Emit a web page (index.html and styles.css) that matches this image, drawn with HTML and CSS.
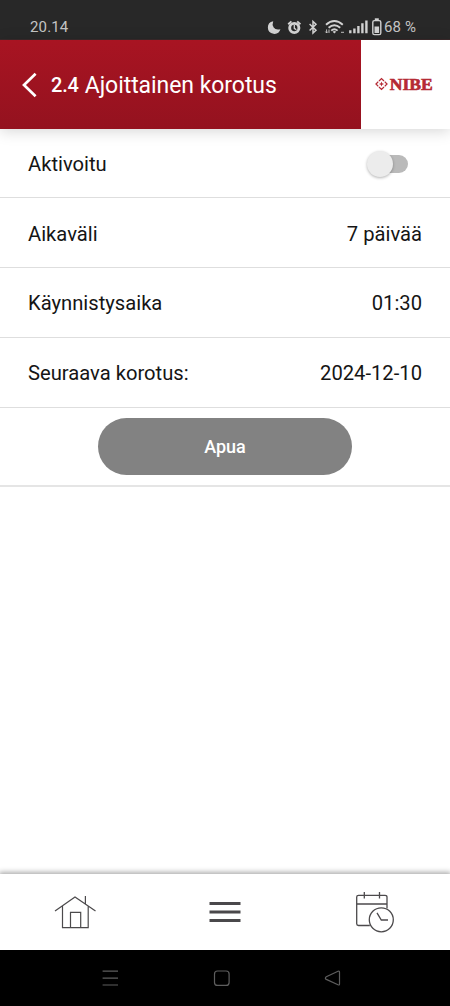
FILE: index.html
```html
<!DOCTYPE html>
<html lang="fi">
<head>
<meta charset="utf-8">
<title>Ajoittainen korotus</title>
<link rel="stylesheet" href="styles.css">
</head>
<body>
<div class="screen">
  <div class="status">
    <span class="clock">20.14</span>
    <div class="status-right">
      <svg class="status-icons" width="116" height="20" viewBox="267 17 116 20" fill="none" stroke="#d2d2d2">
        <path d="M273.2 21.2A6.4 6.4 0 1 0 280.4 29.3Q275.6 30.4 273.7 27.6Q271.8 24.6 273.2 21.2Z" fill="#d2d2d2" stroke="none"/>
        <circle cx="294.3" cy="28" r="4.6" stroke-width="2.9"/>
        <path d="M288.2 24.2L291.4 21.4M300.4 24.2L297.2 21.4" stroke-width="1.9"/>
        <path d="M294.3 25V28.3L296.3 29.8" stroke-width="1.3"/>
        <path d="M309.6 24L316 30.2L313 33V21.4L316 24.2L309.6 30.5" stroke-width="1.5"/>
        <path d="M326 24.8Q334.3 17.3 342.8 24.8M328.6 27.8Q334.3 22.6 340.2 27.8M331.2 30.6Q334.3 27.8 337.6 30.6" stroke-width="1.9"/>
        <path d="M334.4 33.6L332.6 31.7Q334.4 30.3 336.2 31.7Z" fill="#d2d2d2" stroke="none"/>
        <path d="M326.6 33V29.4M325.4 31.6L326.6 33L327.8 31.6M329 29.5V33M341 32.3H344" stroke-width=".9"/>
        <path d="M350.3 30.3V33.3M354.4 28.4V33.3M358.4 26V33.3M362.4 23.2V33.3M366.4 20.5V33.3" stroke-width="2.4"/>
        <rect x="372.8" y="20.6" width="8" height="14" rx="1.6" stroke-width="1.4"/>
        <path d="M374.8 19.2H378.8" stroke-width="1.8"/>
        <path d="M374.5 26.5H379.1V33H374.5Z" fill="#d2d2d2" stroke="none"/>
      </svg>
      <span class="battery-text">68 %</span>
    </div>
  </div>
  <header class="header">
    <div class="title-bar">
      <svg class="back" width="18" height="28" viewBox="0 0 18 28" fill="none" stroke="#fff" stroke-width="2.7"><path d="M15.6 2.8L4 14L15.6 25.2"/></svg>
      <span class="number">2.4</span>
      <h1 class="title">Ajoittainen korotus</h1>
    </div>
    <div class="brand">
      <svg width="60" height="18" viewBox="0 0 60 18">
        <path d="M4 5.9L6.5 3.6L9 5.9M9.7 6.6L12 9L9.7 11.4M9 12.1L6.5 14.4L4 12.1M3.3 11.4L1 9L3.3 6.6" fill="none" stroke="#b52a34" stroke-width="1.3"/>
        <path d="M6.5 6.4L7.2 8.3L9.1 9L7.2 9.7L6.5 11.6L5.8 9.7L3.9 9L5.8 8.3Z" fill="#b52a34"/>
        <text class="brand-name" x="14.7" y="14.5" textLength="43" lengthAdjust="spacingAndGlyphs">NIBE</text>
      </svg>
    </div>
  </header>
  <main class="content">
    <div class="row"><span>Aktivoitu</span><span class="switch"><span class="thumb"></span></span></div>
    <div class="row"><span>Aikaväli</span><span>7 päivää</span></div>
    <div class="row"><span>Käynnistysaika</span><span>01:30</span></div>
    <div class="row"><span>Seuraava korotus:</span><span>2024-12-10</span></div>
    <div class="help-row"><button class="help">Apua</button></div>
  </main>
  <nav class="tabs">
    <svg width="150" height="76" viewBox="0 874 150 76" fill="none" stroke="#4c4a4c" stroke-width="1.2">
      <path d="M55 911L75 897L95.5 911M62.5 906.2V927.6H88.2V906.2M70.5 927.6V912.3H80.7V927.6M85.4 904V896"/>
    </svg>
    <svg width="150" height="76" viewBox="150 874 150 76" fill="none" stroke="#4a484b" stroke-width="3.2">
      <path d="M209.5 903.5H240.5M209.5 912H240.5M209.5 920.5H240.5"/>
    </svg>
    <svg width="150" height="76" viewBox="300 874 150 76" fill="none" stroke="#4c4a4c" stroke-width="1.3">
      <path d="M369.8 925.5H358.5Q356.7 925.5 356.7 923.7V897Q356.7 895.3 358.5 895.3H385Q387 895.3 387 897V908.5M356.7 904H387M364.3 892V898.6M379.5 892V898.6"/>
      <circle cx="381.3" cy="919.8" r="12"/>
      <path d="M377 912.8L381.3 920H388"/>
    </svg>
  </nav>
  <div class="system-nav">
    <svg width="450" height="56" viewBox="0 950 450 56" fill="none" stroke="#5e5e5e" stroke-width="1.2">
      <path d="M102.6 971.2H118M102.6 978.2H118M102.6 985H118"/>
      <rect x="214.5" y="971" width="14.6" height="14.4" rx="3"/>
      <path d="M326.3 976.8L338 971.3Q339.5 970.8 339.5 972.2V984Q339.5 985.4 338 984.8L326.3 979.4Q324.4 978.2 326.3 976.8Z"/>
    </svg>
  </div>
</div>
</body>
</html>
```

FILE: styles.css
```css
* { box-sizing: border-box; }
body { margin: 0; background: #fff; font-family: Roboto, "Liberation Sans", sans-serif; }
svg { display: block; }
.screen { display: flex; flex-direction: column; width: 450px; height: 1006px; overflow: hidden; }
.status { flex: none; height: 40px; padding: 14px 33px 0 30px; display: flex; justify-content: space-between; background: #282828; color: #c4c4c4; font-size: 15px; line-height: 26px; border-bottom: 1px solid #3a292a; }
.clock { letter-spacing: .15px; }
.status-right { display: flex; }
.status-icons { margin-top: 3px; }
.battery-text { width: 34px; padding-left: 1px; white-space: nowrap; letter-spacing: .1px; }
.header { flex: none; display: flex; height: 88.5px; box-shadow: 0 2px 14px rgba(0, 0, 0, .17); }
.title-bar { width: 361px; display: flex; align-items: center; padding-left: 20px; padding-top: 1px; background: linear-gradient(#a81422, #94121f); color: #fff; }
.back { margin-right: 13px; }
.number { font-size: 20px; font-weight: 500; letter-spacing: -.2px; margin-right: 6px; }
.title { margin: 0; padding-top: 2px; font-size: 23px; font-weight: 400; letter-spacing: -.06px; white-space: nowrap; }
.brand { flex: 1; display: flex; align-items: center; padding-left: 14px; background: #fff; }
.brand-name { font: bold 16.5px "Liberation Serif", serif; fill: #b52a34; stroke: #b52a34; stroke-width: .6px; }
.content { flex: 1; }
.row { height: 69.75px; padding: 2px 28px 0; display: flex; align-items: center; justify-content: space-between; border-bottom: 1.5px solid #dedede; color: #151515; font-size: 20.2px; }
.switch { display: flex; align-items: center; margin-right: 14px; }
.switch::after { content: ""; width: 24px; height: 18px; margin-left: -9px; border-radius: 0 9px 9px 0; background: #bababa; }
.thumb { z-index: 1; width: 26px; height: 26px; border-radius: 50%; background: #ececec; box-shadow: 0 1px 3px rgba(0, 0, 0, .3); }
.help-row { height: 79px; display: flex; align-items: center; justify-content: center; border-bottom: 2px solid #e5e5e5; }
.help { width: 254px; height: 57px; padding: 0; border: 0; border-radius: 29px; background: #828282; color: #fff; font: 500 18px Roboto, sans-serif; }
.tabs { flex: none; display: flex; height: 76px; background: #fff; box-shadow: 0 -1px 5px 1px rgba(0, 0, 0, .32); }
.system-nav { flex: none; height: 56px; background: #000; z-index: 1; }
```
